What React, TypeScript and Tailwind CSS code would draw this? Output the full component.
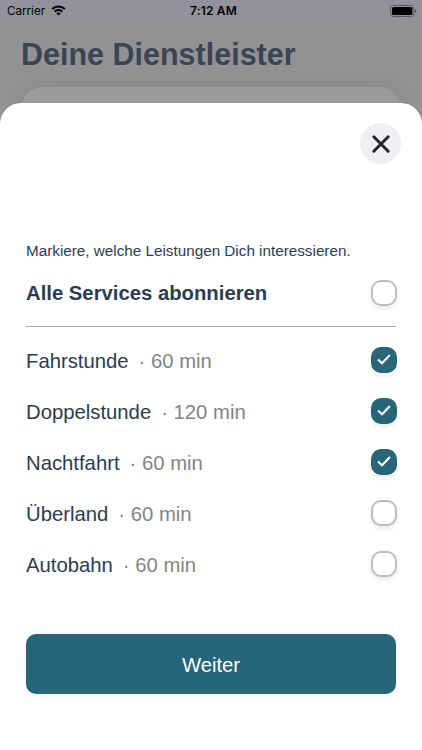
import { useState } from 'react';
import clsx from 'clsx';

type Service = { name: string; minutes: number };

const SERVICES: Service[] = [
  { name: 'Fahrstunde', minutes: 60 },
  { name: 'Doppelstunde', minutes: 120 },
  { name: 'Nachtfahrt', minutes: 60 },
  { name: 'Überland', minutes: 60 },
  { name: 'Autobahn', minutes: 60 },
];

function StatusBar() {
  return (
    <div className="grid h-[22px] grid-cols-3 items-center bg-gradient-to-b from-[#92929e] to-[#929296] pl-[7px] pr-[5px] font-['Inter',sans-serif] text-[12px] text-black">
      <div className="flex items-center gap-[6px]">
        <span className="pt-[2px] text-[11.6px]">Carrier</span>
        <svg width="15" height="11" viewBox="0 0 15 11">
          <path d="M1.2 4.1a9 9 0 0 1 12.6 0" fill="none" stroke="#000" strokeWidth="2.1" />
          <path d="M3.6 6.6a5.5 5.5 0 0 1 7.8 0" fill="none" stroke="#000" strokeWidth="2" />
          <path d="M7.5 10.6 5.3 8.4a3.1 3.1 0 0 1 4.4 0z" />
        </svg>
      </div>
      <span className="pl-[3px] text-center font-semibold tracking-[0.2px]">7:12 AM</span>
      <svg className="justify-self-end" width="27" height="12" viewBox="0 0 27 12">
        <rect x="0.5" y="0.5" width="23.4" height="11" rx="3" fill="none" stroke="#5a5a5e" />
        <rect x="2" y="2" width="20.4" height="8" rx="1.6" />
        <path d="M25 4v4c.9-.4 1.4-1.1 1.4-2S25.9 4.4 25 4z" fill="#5a5a5e" />
      </svg>
    </div>
  );
}

function Checkbox({ checked, label, onChange }: { checked: boolean; label: string; onChange: () => void }) {
  return (
    <button
      role="checkbox"
      aria-checked={checked}
      aria-label={label}
      onClick={onChange}
      className={clsx(
        '-mr-[0.5px] flex size-[26px] flex-shrink-0 items-center justify-center rounded-[10px] shadow-[0_3px_5px_rgba(0,0,0,0.08)]',
        checked ? 'bg-[#266678]' : 'border-2 border-[#bdbdbd] bg-white'
      )}
    >
      {checked && (
        <svg width="14" height="11" viewBox="0 0 14 11" fill="none" stroke="#fff" strokeWidth="2.1" strokeLinecap="square">
          <path d="M1.8 6.2 5 9.2 12.2 1.8" />
        </svg>
      )}
    </button>
  );
}

export default function App() {
  const [selected, setSelected] = useState<string[]>(['Fahrstunde', 'Doppelstunde', 'Nachtfahrt']);
  const allSelected = selected.length === SERVICES.length;

  const toggle = (name: string) => {
    setSelected((prev) => (prev.includes(name) ? prev.filter((n) => n !== name) : [...prev, name]));
  };

  const toggleAll = () => {
    setSelected(allSelected ? [] : SERVICES.map((s) => s.name));
  };

  return (
    <div className="relative h-[750px] w-[422px] overflow-hidden bg-[#929294] font-['Liberation_Sans',Arial,sans-serif]">
      <StatusBar />
      <h1 className="pl-[21px] pt-[14px] text-[30.5px] font-bold leading-[36px] text-[#3a4552]">Deine Dienstleister</h1>
      <div className="mx-[21px] mt-[15px] h-[200px] rounded-[22px] bg-[#9b9b9b] shadow-[0_0_20px_rgba(0,0,0,0.08)]" />

      {/* Bottom sheet */}
      <div className="absolute inset-x-0 bottom-0 top-[103px] flex flex-col rounded-t-[21px] bg-white px-[26px] text-[#2c3c50]">
        <button
          aria-label="Schließen"
          className="-mr-[5.4px] mt-[20px] flex size-[41px] items-center justify-center self-end rounded-full bg-[#efeff4]"
        >
          <svg width="20" height="20" viewBox="0 0 20 20" stroke="#262628" strokeWidth="3" strokeLinecap="round">
            <path d="M2.8 2.8l14.4 14.4M17.2 2.8l-14.4 14.4" />
          </svg>
        </button>

        <p className="mt-[77px] whitespace-nowrap text-[15.25px] leading-[20px]">
          Markiere, welche Leistungen Dich interessieren.
        </p>
        <div className="mt-[19px] flex h-[26px] items-center justify-between">
          <h2 className="text-[20.3px] font-bold leading-[26px]">Alle Services abonnieren</h2>
          <Checkbox checked={allSelected} label="Alle Services abonnieren" onChange={toggleAll} />
        </div>
        <div className="mt-[20px] h-px bg-[#a8a8a8]" />

        <ul className="mt-[7px]">
          {SERVICES.map((s) => (
            <li key={s.name} className="flex h-[51px] items-center justify-between text-[20.3px] leading-[26px]">
              <p className="pt-[2px]">
                {s.name}
                <span className="ml-[10px] text-[#848484]">· {s.minutes} min</span>
              </p>
              <Checkbox checked={selected.includes(s.name)} label={s.name} onChange={() => toggle(s.name)} />
            </li>
          ))}
        </ul>

        <button className="mt-[45px] h-[60px] rounded-[10px] bg-[#266678] pt-[2px] text-[20.3px] text-white shadow-[0_3px_5px_rgba(0,0,0,0.06)]">
          Weiter
        </button>
      </div>
    </div>
  );
}
